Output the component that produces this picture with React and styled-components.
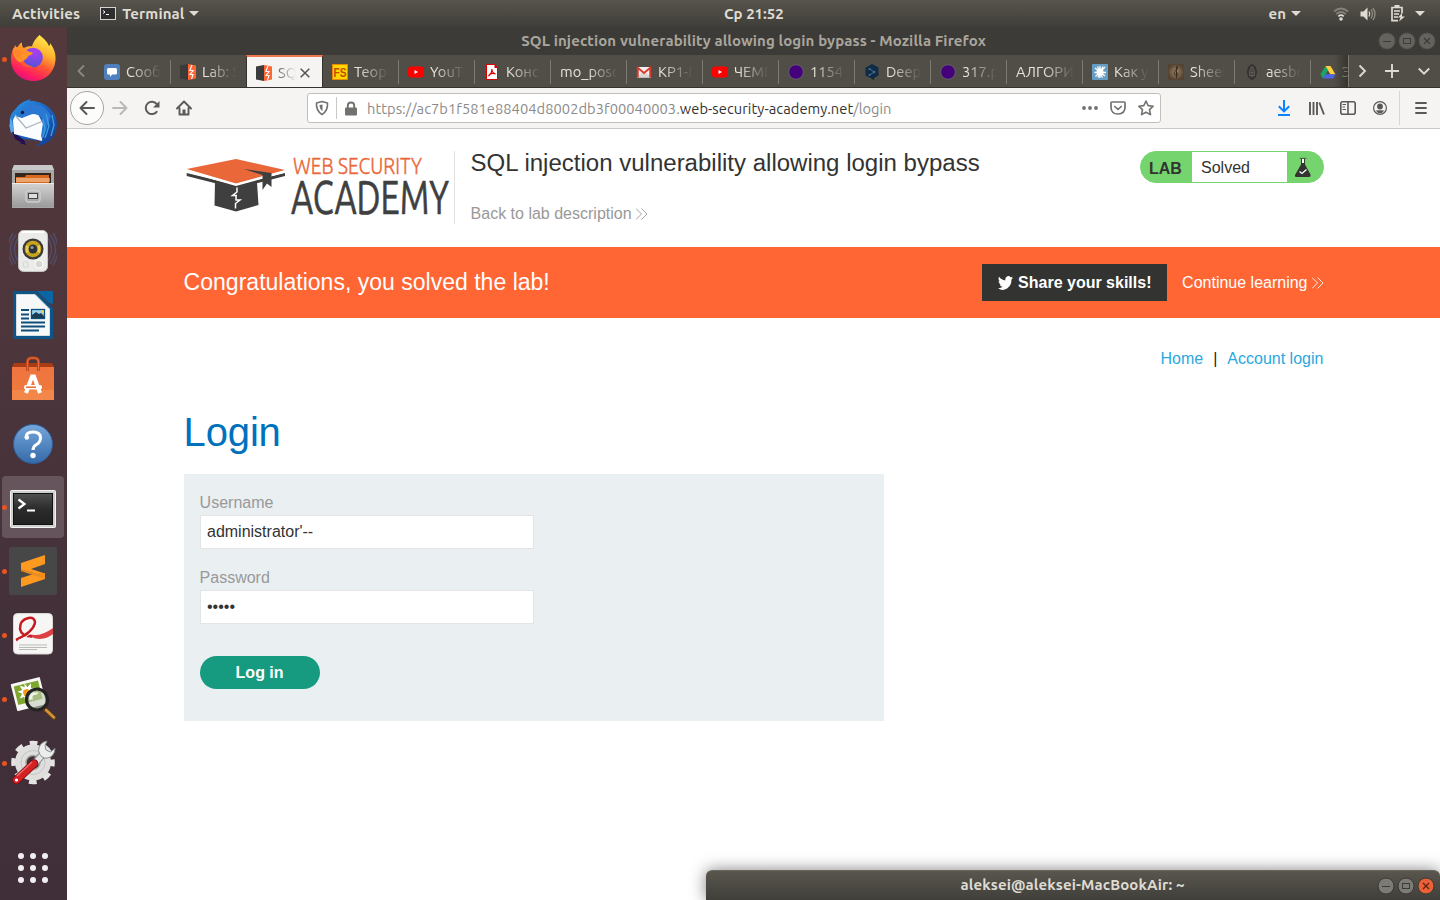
import React from "react";
import styled, { createGlobalStyle, css } from "styled-components";

const Global = createGlobalStyle`
  *, *::before, *::after { box-sizing: border-box; }
  body { margin: 0; overflow: hidden; }
  svg { display: block; flex: none; }
`;

const uiFont = `Ubuntu, "Noto Sans", "Open Sans", sans-serif`;
const pageFont = `"Liberation Sans", Arial, sans-serif`;

const Desktop = styled.div`
  position: relative;
  display: flex;
  flex-direction: column;
  width: 1440px;
  height: 900px;
  overflow: hidden;
  background: #fff;
  font-family: ${uiFont};
  font-size: 14.67px;
`;

/* ---------- system bar ---------- */

const TopBar = styled.header`
  display: grid;
  grid-template-columns: 712px auto 1fr;
  align-items: center;
  flex: none;
  height: 27px;
  padding: 0 15px 0 12px;
  background: linear-gradient(#57544c, #3f3e39);
  color: #dfdbd2;
  font-size: 15px;
  font-weight: 700;
`;

const BarGroup = styled.div`
  display: flex;
  align-items: center;
  justify-content: ${(p) => (p.$end ? "flex-end" : "flex-start")};
`;

const BarText = styled.span`
  line-height: 27px;
  white-space: nowrap;
  letter-spacing: ${(p) => p.$spacing || "0"};
  margin-left: ${(p) => p.$left || 0}px;
`;

const Caret = styled.span`
  width: 0;
  height: 0;
  margin-left: ${(p) => p.$left}px;
  border: 5px solid transparent;
  border-top-color: #dfdbd2;
  border-bottom: 0;
`;

const BarIcon = styled.svg`
  margin-left: ${(p) => p.$left}px;
`;

/* ---------- dock ---------- */

const Body = styled.div`
  display: flex;
  flex: 1;
  min-height: 0;
`;

const Dock = styled.nav`
  display: flex;
  flex-direction: column;
  flex: none;
  width: 67px;
  background: linear-gradient(#54393c, #4a343b 45%, #41303a 75%, #402e38);
`;

const DockCell = styled.div`
  display: flex;
  align-items: center;
  height: 64px;
  padding-left: 2px;
`;

const DockTile = styled.div`
  display: flex;
  align-items: center;
  width: 62px;
  height: 62px;
  border-radius: 4px;
  background: ${(p) => (p.$active ? "rgba(255,255,255,.17)" : "transparent")};
`;

const RunDot = styled.span`
  flex: none;
  width: 5px;
  height: 5px;
  margin-right: 2px;
  border-radius: 50%;
  background: ${(p) => (p.$on ? "#e95420" : "transparent")};
`;

const AppsGrid = styled.div`
  display: grid;
  grid-template-columns: repeat(3, 6px);
  gap: 6px;
  margin: auto 0 17px 18px;
`;

const AppsDot = styled.span`
  width: 6px;
  height: 6px;
  border-radius: 50%;
  background: #f2eff0;
`;

/* ---------- browser chrome ---------- */

const Browser = styled.main`
  display: flex;
  flex-direction: column;
  flex: 1;
  min-width: 0;
`;

const TitleBar = styled.div`
  display: grid;
  grid-template-columns: 80px 1fr 80px;
  align-items: center;
  flex: none;
  height: 28px;
  padding-right: 4px;
  background: #3c3b37;
  color: #aaa69d;
  font-weight: 700;
`;

const TitleText = styled.div`
  text-align: center;
  font-size: 15px;
  letter-spacing: 0.11px;
  white-space: nowrap;
  padding: 0 0 2px 4px;
`;

const WindowButtons = styled.div`
  display: flex;
  justify-content: flex-end;
  gap: 2px;
`;

const TabStrip = styled.div`
  display: flex;
  flex: none;
  height: 33px;
  background: #504e47;
  border-bottom: 1px solid #33322e;
`;

const ScrollLeft = styled.div`
  display: flex;
  align-items: center;
  justify-content: center;
  width: 28px;
`;

const TabList = styled.div`
  position: relative;
  display: flex;
  width: 1253px;
  overflow: hidden;
  &::after {
    content: "";
    position: absolute;
    top: 0;
    right: 0;
    bottom: 0;
    width: 14px;
    background: linear-gradient(90deg, transparent, rgba(45, 44, 40, 0.75));
  }
`;

const Tab = styled.div`
  display: flex;
  align-items: center;
  flex: none;
  width: 76px;
  height: 33px;
  padding-left: 9px;
  background: linear-gradient(#7d7a73, #7d7a73) right 5px / 1px 24px no-repeat;
  ${(p) => p.$plain && css`background: none;`}
  ${(p) =>
    p.$active &&
    css`
      width: 77px;
      margin-left: -1px;
      background: #f5f4f3;
      border-top: 2px solid #f0764f;
      border-left: 1px solid #33322e;
      border-right: 1px solid #33322e;
    `}
`;

const TabLabel = styled.span`
  width: ${(p) => p.$width || 35}px;
  margin-left: ${(p) => (p.$noIcon ? 0 : 6)}px;
  overflow: hidden;
  line-height: 24px;
  white-space: nowrap;
  color: ${(p) => (p.$active ? "#55534e" : "#e6e3dc")};
  mask-image: linear-gradient(90deg, #000 calc(100% - ${(p) => (p.$active ? 20 : 30)}px), transparent);
`;

const TabClose = styled.svg`
  margin-left: 4px;
`;

const StripActions = styled.div`
  display: flex;
  align-items: center;
  flex: 1;
  padding-left: 8px;
  border-left: 1px solid #7d7a73;
`;

const NavBar = styled.div`
  display: flex;
  align-items: center;
  flex: none;
  height: 41px;
  padding: 0 12px 0 3px;
  background: #f5f4f3;
  border-bottom: 1px solid #cbc9c7;
`;

const BackButton = styled.div`
  display: flex;
  align-items: center;
  justify-content: center;
  width: 34px;
  height: 34px;
  border: 1px solid #a7a5a2;
  border-radius: 50%;
  background: #fcfcfb;
`;

const NavIcon = styled.svg`
  margin-left: ${(p) => p.$left}px;
`;

const AddressBar = styled.div`
  display: flex;
  align-items: center;
  width: 854px;
  height: 30px;
  margin-left: 115px;
  padding: 0 6px 0 7px;
  border: 1px solid #c2c0bd;
  border-radius: 3px;
  background: #fff;
`;

const AddressDivider = styled.span`
  width: 1px;
  height: 22px;
  margin-left: 7px;
  background: #c9c8c6;
`;

const Url = styled.div`
  flex: 1;
  margin-left: 10px;
  padding-top: 1px;
  color: #8c8b89;
  white-space: nowrap;
`;

const UrlPrefix = styled.span`
  letter-spacing: 0.05px;
`;

const UrlHost = styled.span`
  color: #33322f;
  letter-spacing: 0.06px;
`;

const MenuDivider = styled.span`
  width: 1px;
  height: 34px;
  margin-left: 12px;
  background: #d8d6d4;
`;

/* ---------- page ---------- */

const Page = styled.div`
  flex: 1;
  background: #fff;
  color: #333332;
  font-family: ${pageFont};
  font-size: 16px;
`;

const LabHeader = styled.div`
  display: flex;
  height: 118px;
  padding: 22px 116px 0 116.6px;
`;

const LogoBox = styled.div`
  width: 271px;
  height: 73px;
  border-right: 1px solid #e0e0e0;
`;

const LabInfo = styled.div`
  flex: 1;
  padding-left: 16px;
`;

const LabTitle = styled.h2`
  margin: -2px 0 0;
  font-size: 24.03px;
  font-weight: 400;
  line-height: 28px;
`;

const TextLink = styled.a`
  display: flex;
  align-items: center;
  gap: 4px;
  line-height: 20px;
  color: ${(p) => p.$color};
  margin-top: ${(p) => p.$top || 0}px;
`;

const LabStatus = styled.div`
  display: flex;
  width: 184px;
  height: 32px;
  border: 1px solid #75d46e;
  border-radius: 16px;
  overflow: hidden;
  background: #75d46e;
`;

const StatusTag = styled.strong`
  width: 51px;
  padding-left: 8px;
  line-height: 33px;
`;

const StatusValue = styled.span`
  width: 95px;
  padding-left: 9px;
  background: #fff;
  line-height: 31px;
`;

const StatusIcon = styled.span`
  padding: 5px 0 0 7px;
`;

const Banner = styled.div`
  display: flex;
  align-items: center;
  height: 71px;
  padding: 0 116.5px 0 116.6px;
  background: #ff6633;
  color: #fff;
`;

const BannerText = styled.p`
  flex: 1;
  margin: 0;
  font-size: 23.04px;
`;

const ShareButton = styled.button`
  display: flex;
  align-items: center;
  gap: 5px;
  width: 185px;
  height: 37px;
  margin-right: 15px;
  padding: 0 0 0 16px;
  border: 0;
  background: #333332;
  color: #fff;
  font: 700 16px ${pageFont};
  white-space: nowrap;
`;

const SiteNav = styled.nav`
  display: flex;
  justify-content: flex-end;
  gap: 10px;
  padding: 31px 116.6px 0 0;
  line-height: 20px;
  color: #222;
`;

const NavLink = styled.a`
  color: #29a9e0;
`;

const Content = styled.section`
  padding: 39px 0 0 116.6px;
`;

const Heading = styled.h1`
  margin: 0;
  font-size: 40px;
  letter-spacing: -0.15px;
  font-weight: 400;
  line-height: 48px;
  color: #0071bc;
`;

const LoginForm = styled.form`
  width: 700px;
  height: 247px;
  margin-top: 18px;
  padding: 18px 16px;
  background: #eaeff2;
`;

const Label = styled.label`
  display: block;
  height: 23px;
  line-height: 21px;
  color: #999;
`;

const Input = styled.input`
  display: block;
  width: 334px;
  height: 34px;
  margin-bottom: 18px;
  padding: 0 6.4px;
  border: 1px solid #e4e4e4;
  background: #fff;
  color: #333332;
  font: 16px ${pageFont};
  outline: 0;
`;

const LoginButton = styled.button`
  display: block;
  width: 120px;
  height: 33px;
  margin-top: 32px;
  padding: 0;
  border: 0;
  border-radius: 17px;
  background: #169b80;
  color: #fff;
  font: 700 16px ${pageFont};
`;

/* ---------- terminal window peeking from the bottom ---------- */

const TerminalWindow = styled.aside`
  position: absolute;
  right: 0;
  bottom: 0;
  display: grid;
  grid-template-columns: 80px 1fr 80px;
  align-items: center;
  width: 734px;
  height: 30px;
  padding: 0 5px 0 0;
  border-top: 1px solid #6a675f;
  border-radius: 6px 6px 0 0;
  background: linear-gradient(#59564e, #403f3a);
  box-shadow: 0 0 16px rgba(0, 0, 0, 0.5);
  color: #dfdbd2;
  font-weight: 700;
`;

/* ---------- glyphs ---------- */

const WindowButton = ({ kind, fill, ring, mark }) => (
  <svg width="18" height="18" viewBox="0 0 18 18">
    <circle cx="9" cy="9" r="8" fill={fill} stroke={ring} />
    {kind === "min" && <path d="M5 9.5h8" stroke={mark} />}
    {kind === "max" && <rect x="5.5" y="6.5" width="7" height="5" fill="none" stroke={mark} />}
    {kind === "close" && <path d="M6 6l6 6M12 6l-6 6" stroke={mark} strokeWidth="1.2" />}
  </svg>
);

const DoubleChevron = ({ color }) => (
  <svg width="12" height="12" viewBox="0 0 12 12" fill="none" stroke={color} strokeWidth="0.9">
    <path d="M0 .5L5.500 6 0 11.500M5.500 .5L11 6 5.500 11.500" />
  </svg>
);

const favicons = {
  chat: (
    <>
      <rect width="16" height="16" rx="3" fill="#4f80bd" />
      <path d="M4.500 4h7Q13 4 13 5.500v3.500Q13 10.500 11.500 10.500H8L6 13v-2.500H4.500Q3 10.500 3 9V5.500Q3 4 4.500 4z" fill="#fff" />
    </>
  ),
  burp: (
    <>
      <path d="M0 1.500L8 0v16L0 14.500z" fill="#3b3b3b" />
      <path d="M8 0l8 1.500v13L8 16z" fill="#ff6633" />
      <path d="M12 1L9.800 6.500h3.400L10 10.500h3L11.500 15" fill="none" stroke="#fff" strokeWidth="1.100" />
    </>
  ),
  fs: (
    <>
      <rect x=".5" y=".5" width="15" height="15" fill="#ffd800" stroke="#e98b00" />
      <text x="1.500" y="12.500" fontFamily="Liberation Sans" fontWeight="700" fontSize="12" textLength="13" lengthAdjust="spacingAndGlyphs" fill="#c84a00">FS</text>
    </>
  ),
  youtube: (
    <>
      <rect y="2.500" width="16" height="11" rx="3" fill="#f00" />
      <path d="M6.500 6v4l3.500-2z" fill="#fff" />
    </>
  ),
  pdf: (
    <>
      <path d="M2.500.5h8l3 3v12h-11z" fill="#fff" stroke="#d90000" />
      <path d="M10.500 0v4h3.500z" fill="#d90000" />
      <path d="M7.800 5c.3 3-1.500 5.500-3.300 7 1-2 4-3 7-2.200-2-.3-3.500-2.500-3.700-4.800z" fill="none" stroke="#d90000" strokeWidth="1.200" />
    </>
  ),
  gmail: (
    <>
      <path d="M1 3h14v10.500H1z" fill="#f3f1ef" />
      <path d="M1 13.500l5-5 2 1.500 2-1.500 5 5z" fill="#d9d5d0" />
      <path d="M1.800 13.500V3.800L8 9l6.200-5.200v9.700" fill="none" stroke="#dc3a2e" strokeWidth="1.900" />
    </>
  ),
  purple: <circle cx="8" cy="8" r="7.300" fill="#43007a" stroke="#66606a" />,
  deepl: (
    <>
      <path d="M8 0l6.500 3.600v8L10 14v2.300L7.500 14.600 1.500 11.500V3.700z" fill="#0f2b46" />
      <path d="M5.500 5l5 3-5 3" fill="none" stroke="#4d7292" />
      <circle cx="5.500" cy="5" r="1" fill="#4d7292" />
      <circle cx="10.500" cy="8" r="1" fill="#4d7292" />
      <circle cx="5.500" cy="11" r="1" fill="#4d7292" />
    </>
  ),
  burst: (
    <>
      <rect width="16" height="16" rx="1" fill="#669dc4" />
      <circle cx="8" cy="8" r="3.500" fill="#fff" />
      <path d="M8 2v12M3 4l10 8M13 3L3.500 12.500M2.500 8.500H14M5.500 2.500l5 11M11 2.500l-5 11" stroke="#fff" strokeWidth="1.300" />
    </>
  ),
  clef: (
    <>
      <defs>
        <radialGradient id="clefPaper">
          <stop offset="0" stopColor="#a48a66" />
          <stop offset="1" stopColor="#544232" />
        </radialGradient>
      </defs>
      <rect width="16" height="16" fill="url(#clefPaper)" />
      <path d="M8.500 14V3.500Q8.500 2 9.500 2.500 10.500 4 7 7 5 10 7.500 11.300q3 .3 2.700-1.800Q9.500 7.500 7.500 9.200" fill="none" stroke="#2c2018" strokeWidth=".8" />
    </>
  ),
  oval: (
    <>
      <ellipse cx="8" cy="8" rx="4.300" ry="7.300" fill="#3b3a36" stroke="#2d2c29" />
      <path d="M8 2.500q-3 3-2.500 9h5q.5-6-2.500-9zM8 5v8M6.500 8.500h3" fill="none" stroke="#69665f" strokeWidth=".8" />
    </>
  ),
  drive: (
    <>
      <path d="M5.500 2L8 6.300 3 14.500.5 10.200z" fill="#16a765" />
      <path d="M5.500 2h5l5 8.500h-5z" fill="#ffcf3f" />
      <path d="M5.500 10.300h10L13 14.500H3z" fill="#5062e8" />
    </>
  ),
};

const Favicon = ({ name }) => (
  <svg width="16" height="16" viewBox="0 0 16 16">{favicons[name]}</svg>
);

const tabs = [
  { icon: "chat", label: "Сообщения" },
  { icon: "burp", label: "Lab: SQL", plain: true },
  { icon: "burp", label: "SQL inj", active: true },
  { icon: "fs", label: "Теория" },
  { icon: "youtube", label: "YouTube" },
  { icon: "pdf", label: "Конспект" },
  { label: "mo_posobie" },
  { icon: "gmail", label: "КР1-Мат" },
  { icon: "youtube", label: "ЧЕМПИОН" },
  { icon: "purple", label: "1154.pdf" },
  { icon: "deepl", label: "DeepL" },
  { icon: "purple", label: "317.pdf" },
  { label: "АЛГОРИТМ" },
  { icon: "burst", label: "Как учить" },
  { icon: "clef", label: "Sheet" },
  { icon: "oval", label: "aesbook" },
  { icon: "drive", label: "Экзамен" },
];

/* ---------- launcher icons ---------- */

const launchers = [
  {
    id: "firefox",
    running: true,
    art: (
      <>
        <defs>
          <linearGradient id="fxBody" x1=".8" y1="0" x2=".35" y2="1">
            <stop offset="0" stopColor="#fff14f" />
            <stop offset=".35" stopColor="#ffb52e" />
            <stop offset=".62" stopColor="#ff5634" />
            <stop offset=".85" stopColor="#ff1e60" />
            <stop offset="1" stopColor="#e3127b" />
          </linearGradient>
          <radialGradient id="fxGlobe" cx=".6" cy=".2" r=".85">
            <stop offset="0" stopColor="#b23cf2" />
            <stop offset="1" stopColor="#4a55d8" />
          </radialGradient>
        </defs>
        <path d="M30.500 0C34 3 38 6 40 11c1-.5 1-1.500 1-3 4 5 6 11 5.500 17C45.500 38 36 46 24.500 46 12 46 2 37 2 24 2 18 4 13 7 10c0 1.500.3 2.500 1 3.500C9.500 10 11 8 13 7.500c-.5 3 .5 4.500 2 5.500 2-1.500 5-2 8-1.700C24 7 27 3 30.500 0z" fill="url(#fxBody)" />
        <circle cx="24" cy="22.500" r="9.800" fill="url(#fxGlobe)" />
        <path d="M4 14c5-4 10-2 13.500 1.500 2.500 1.500 4.500 1 6.500 2.500-1 2-3.500 2-5 3.500-1 3-3.500 2.500-4 4.500 0 3-4 1-5 1C6 24 3 19 4 14z" fill="#ff9327" />
        <path d="M5 15c4-1 7 1 9 3l-5 5c-2-1-4-4-4-8z" fill="#ff7d2e" opacity=".7" />
        <path d="M14 25c2 4 6 6 10 6-4 3-10 1-12-3z" fill="#ff5a36" />
      </>
    ),
  },
  {
    id: "thunderbird",
    art: (
      <>
        <defs>
          <linearGradient id="tbBody" x1="0" y1="0" x2="1" y2="1">
            <stop offset="0" stopColor="#2a9bea" />
            <stop offset=".5" stopColor="#1b63c0" />
            <stop offset="1" stopColor="#12398e" />
          </linearGradient>
        </defs>
        <path d="M9 7C14 2 21 0 22 0l-2 2C33 1 47 10 48 24c0 12-8 22-20 23l4-5L6 39C0 32-1 20 3 14z" fill="url(#tbBody)" />
        <path d="M2 31l4 9 7 4h-3l7 2-2-5z" fill="#241054" />
        <path d="M4 21L6 17l7 2 10-4h6l5 10-1 17L5 35z" fill="#fbfcfe" />
        <path d="M6 16l11 13 17-7" fill="none" stroke="#aab2be" strokeWidth="1.200" />
        <path d="M11 13q4-8 16-8 10 2 15 12l-5 14-4 9-1-3 2-13q0-8-9-9-8 0-12 4z" fill="#2b78d2" />
        <path d="M37 15l3 12-4 12M43 16l2 10-3 11M34 20l2 10-2 8" fill="none" stroke="#3aa0e6" strokeWidth="1.300" />
        <circle cx="13.500" cy="13.500" r="1.700" fill="#111a3a" />
        <path d="M3 22l-2-3v7l-1-1 2 9 3-2z" fill="#5aa9ee" />
      </>
    ),
  },
  {
    id: "files",
    art: (
      <>
        <defs>
          <linearGradient id="flFront" x1="0" y1="0" x2="0" y2="1">
            <stop offset="0" stopColor="#d4d4d4" />
            <stop offset="1" stopColor="#9b9b9b" />
          </linearGradient>
        </defs>
        <path d="M5 2h38l2 5v38H3V7z" fill="#a6a6a6" />
        <path d="M5 2h38l2 5H3z" fill="#c8c8c8" />
        <rect x="6" y="10" width="36" height="10" fill="#33261f" />
        <path d="M7 14h9l1-2h23v8H7z" fill="#d96920" />
        <path d="M7 16h34M7 18h34" stroke="#ffe0b8" />
        <path d="M3 20h42v24H3z" fill="url(#flFront)" />
        <path d="M3 20.500h42" stroke="#ececec" />
        <rect x="17" y="28" width="14" height="11" rx="2" fill="#aaa" stroke="#dedede" />
        <rect x="19.500" y="30.500" width="9" height="5" fill="#dedede" stroke="#444" />
      </>
    ),
  },
  {
    id: "music",
    art: (
      <>
        <g fill="none" stroke="#56679a" strokeWidth="1.500" opacity=".45">
          <path d="M7 8Q-4 22 7 37M4 6Q-6 22 4 38M9 11Q2 22 9 34M41 8Q52 22 41 37M44 6Q54 22 44 38M39 11Q46 22 39 34" />
        </g>
        <rect x="9.500" y="3.500" width="29" height="41" rx="5" fill="#ebebe9" stroke="#c4c4c1" />
        <path d="M13 5h22" stroke="#fff" strokeWidth="2" />
        <circle cx="24" cy="22" r="10.500" fill="#3a3a3a" />
        <circle cx="24" cy="22" r="8.300" fill="#c6a51c" />
        <path d="M24 22l-7-4v8zM24 22l7-4v8z" fill="#e9ce4f" />
        <circle cx="24" cy="22" r="4.500" fill="#2d3337" />
        <circle cx="23" cy="20.500" r="1.600" fill="#8f9aa2" />
        <circle cx="30" cy="37" r="4" fill="#d6d6d2" stroke="#fff" />
        <rect x="14" y="35" width="5" height="5" rx="1" fill="none" stroke="#d4d4d0" />
      </>
    ),
  },
  {
    id: "writer",
    art: (
      <>
        <path d="M5 0h22l17 17v31H5q-1 0-1-1V1q0-1 1-1z" fill="#0d5487" />
        <path d="M7.500 3.500h18.500L40.500 18v26.500h-33z" fill="#f7f8f8" stroke="#d5dde2" />
        <path d="M28 0h15q1 0 1 1v12L40 12z" fill="#0b66a6" />
        <path d="M12 19h8M12 23.500h8M12 27.500h8M12 31.500h24M12 35.500h24M12 39.500h18" stroke="#0e4e7c" strokeWidth="2" />
        <rect x="22.500" y="18.500" width="13" height="9" fill="#9ed4ef" stroke="#0e4e7c" strokeWidth="1.300" />
        <path d="M23 27v-3l4-3 3 2 2-1 3 3v2z" fill="#183d55" />
        <circle cx="33.500" cy="20.500" r="1.500" fill="#f5cf44" />
      </>
    ),
  },
  {
    id: "software",
    art: (
      <>
        <defs>
          <linearGradient id="swBag" x1="0" y1="0" x2="0" y2="1">
            <stop offset="0" stopColor="#ee7440" />
            <stop offset="1" stopColor="#f07b3c" />
          </linearGradient>
        </defs>
        <path d="M5 8h38l2 4H3z" fill="#a93c14" />
        <path d="M3 12h42v33H3z" fill="url(#swBag)" />
        <path d="M3 35h42v10H3z" fill="#f48d4f" opacity=".7" />
        <path d="M18.500 16V7q0-4 4-4h3q4 0 4 4v9" fill="none" stroke="#bf461b" strokeWidth="3" />
        <path d="M18.500 16V7q0-4 4-4h3q4 0 4 4v9" fill="none" stroke="#e77043" strokeWidth="1" />
        <path d="M17 38L23 21.500h2L31 38" fill="none" stroke="#fff" strokeWidth="4" />
        <rect x="15" y="30" width="18" height="4.500" rx="2" fill="#fff" />
        <path d="M17 32.200h10" stroke="#ea6b30" strokeWidth="1.500" />
      </>
    ),
  },
  {
    id: "help",
    art: (
      <>
        <defs>
          <linearGradient id="hpDisc" x1="0" y1="0" x2="0" y2="1">
            <stop offset="0" stopColor="#75a7dc" />
            <stop offset="1" stopColor="#356aa8" />
          </linearGradient>
        </defs>
        <circle cx="24" cy="25" r="19.500" fill="url(#hpDisc)" stroke="#2d5f9c" />
        <path d="M17 18.500q0-5.500 7-5.500 7.500 0 7.500 6 0 4-4 6.500-3.500 2-3.500 5.500" fill="none" stroke="#fff" strokeWidth="3" />
        <circle cx="17.800" cy="18.500" r="2.300" fill="#fff" />
        <circle cx="24" cy="36.500" r="2.700" fill="#fff" />
      </>
    ),
  },
  {
    id: "terminal",
    running: true,
    active: true,
    art: (
      <>
        <defs>
          <linearGradient id="tmScreen" x1="0" y1="0" x2="0" y2="1">
            <stop offset="0" stopColor="#505050" />
            <stop offset=".5" stopColor="#2b2b2b" />
            <stop offset="1" stopColor="#222" />
          </linearGradient>
        </defs>
        <rect x="1.500" y="7.500" width="45" height="37" rx="1" fill="#cfcfcd" stroke="#f4f4f4" />
        <rect x="4.500" y="10.500" width="39" height="31" fill="url(#tmScreen)" stroke="#111" />
        <path d="M9.500 16.500l6 4.500-6 4.500" fill="none" stroke="#fff" strokeWidth="2.200" />
        <path d="M18 27.500h8" stroke="#fff" strokeWidth="2" />
      </>
    ),
  },
  {
    id: "editor",
    running: true,
    art: (
      <>
        <rect width="48" height="48" rx="2" fill="#474747" />
        <path d="M12 16l24-8v9l-14 5 14 4.500v5.500L12 40v-9l14-4.500-14-4z" fill="#ff9a20" />
        <path d="M12 22.500L26 26.500l10-.5v6L12 24z" fill="#f08c1b" />
      </>
    ),
  },
  {
    id: "documents",
    running: true,
    art: (
      <>
        <rect x="4.500" y="2.500" width="39" height="40.500" rx="4" fill="#f6f6f5" stroke="#d8d8d6" />
        <path d="M17 22q12 6 27-5v6q-10 8-22 3z" fill="#dc4043" />
        <path d="M7 29Q24 21 26 12 26 6 19.500 7 10.500 9 11 18q1.500 7.500 12 7.500" fill="none" stroke="#c71920" strokeWidth="2.500" />
        <path d="M9 29.500Q26 23 28 12" fill="none" stroke="#fff" strokeWidth="1" />
        <path d="M10 34h28M10 36.500h28M10 38.500h18" stroke="#b9b9b7" />
      </>
    ),
  },
  {
    id: "images",
    running: true,
    art: (
      <>
        <g transform="rotate(-14 20 19)">
          <rect x="4.500" y="5" width="30" height="28" rx="1" fill="#f7f7f5" />
          <rect x="7" y="8" width="25" height="19" fill="#7fa62f" />
          <path d="M18 7.500l2.200 4.500 4.200-3-1 5 5 .5-4 3 3.500 4-5-.5-.5 5-4-3.500-4 3 .5-5-5 .5 3.500-4-4-3 5-.5-1.500-5 4.500 3z" fill="#fff" />
          <circle cx="18" cy="17" r="3.500" fill="#f39d17" />
        </g>
        <path d="M36 34l9 9" stroke="#5f401c" strokeWidth="4.500" strokeLinecap="round" />
        <path d="M37 35l8 7.500" stroke="#d69435" strokeWidth="2.500" strokeLinecap="round" />
        <circle cx="28" cy="24.500" r="10.500" fill="#bfcbb7" fillOpacity=".6" stroke="#242424" strokeWidth="3.200" />
        <path d="M21 25q1-7 8-7" fill="none" stroke="#fff" strokeWidth="2" opacity=".7" />
      </>
    ),
  },
  {
    id: "tweaks",
    running: true,
    art: (
      <>
        <circle cx="24" cy="23.500" r="18.800" fill="none" stroke="#e4e4e2" strokeWidth="6" strokeDasharray="7.500 7.265" strokeDashoffset="3.750" />
        <circle cx="24" cy="23.500" r="12.500" fill="none" stroke="#dededc" strokeWidth="11" />
        <circle cx="24" cy="23.500" r="12" fill="none" stroke="#c5c5c3" />
        <circle cx="24" cy="23.500" r="7" fill="none" stroke="#a5a5a3" strokeWidth="1.500" />
        <path d="M26 24l8-9" stroke="#8b8e8f" strokeWidth="7.500" />
        <path d="M26 24l9-10" stroke="#e4e6e6" strokeWidth="5.500" />
        <path d="M38 2q-8 1.500-8.500 9.500 2 9 9.500 7.500 6.500-2 7-9.500l-4.500 3.500-4.500-2-1-4.500z" fill="#eceeee" stroke="#8b8e8f" />
        <path d="M7.500 41L25 24.500" stroke="#7c0d10" strokeWidth="8.500" strokeLinecap="round" />
        <path d="M7.500 41L25 24.500" stroke="#d32124" strokeWidth="6.800" strokeLinecap="round" />
        <path d="M8 37L23 23" stroke="#ee6a67" strokeWidth="1.500" />
        <circle cx="7.500" cy="41" r="1.600" fill="#fff" />
      </>
    ),
  },
];

const AcademyLogo = () => (
  <svg width="267" height="73" viewBox="0 0 267 73">
    <path d="M2.700 22l49.300 12 49-12v3L52 37.500 2.700 25z" fill="#3f3f3f" />
    <path d="M2.700 18L52 8l49 11-49 13.500z" fill="#ea6739" />
    <path d="M31 31.500l21 5.500 21-5.500L74.500 54 52 60.500 30.500 54.500z" fill="#3f3f3f" />
    <path d="M2.700 19.800L52 34l49-13.500" fill="none" stroke="#fff" strokeWidth="2" />
    <path d="M60 18l27.500 4V36l-4.500-3.500-4.500 6.500V24z" fill="#3f3f3f" />
    <path d="M53 36.500v4.500l-4.500 3.500H53M51.500 57.500v-5L56 49h-4v-4.500" fill="none" stroke="#fff" strokeWidth="1.500" />
    <text x="109" y="23" fontFamily="Ubuntu, Roboto, sans-serif" fontWeight="300" fontSize="23" textLength="129" lengthAdjust="spacingAndGlyphs" fill="#ea6739" stroke="#ea6739" strokeWidth=".4">WEB SECURITY</text>
    <text x="107" y="63" fontFamily="Ubuntu, Roboto, sans-serif" fontWeight="400" fontSize="46" textLength="158" lengthAdjust="spacingAndGlyphs" fill="#3f3f3f" stroke="#3f3f3f" strokeWidth=".7" strokeLinejoin="round">ACADEMY</text>
  </svg>
);

export default function App() {
  return (
    <Desktop>
      <Global />
      <TopBar>
        <BarGroup>
          <BarText $spacing=".15px">Activities</BarText>
          <BarIcon $left={20} width="16" height="13" viewBox="0 0 16 13">
            <rect x=".5" y=".5" width="15" height="12" fill="#2e2e2e" stroke="#d6d4d0" />
            <path d="M3 3.500l2 1.500-2 1.500M6 7.500h3" fill="none" stroke="#fff" />
          </BarIcon>
          <BarText $left={6} $spacing=".1px">Terminal</BarText>
          <Caret $left={5} />
        </BarGroup>
        <BarText>Ср 21:52</BarText>
        <BarGroup $end>
          <BarText>en</BarText>
          <Caret $left={5} />
          <BarIcon $left={32} width="16" height="16" viewBox="0 0 16 16" fill="none" strokeWidth="1.700">
            <path d="M1 5.500Q8-.5 15 5.500M3.300 8Q8 4 12.700 8" stroke="#858279" />
            <path d="M5.300 10.300Q8 8 10.700 10.300" stroke="#dfdbd2" />
            <circle cx="8" cy="13" r="1.800" fill="#dfdbd2" />
          </BarIcon>
          <BarIcon $left={11} width="16" height="16" viewBox="0 0 16 16" fill="none">
            <path d="M.5 5.500h3l4-4v13l-4-4h-3z" fill="#dfdbd2" />
            <path d="M9 5.500q1.500 2.500 0 5" stroke="#dfdbd2" strokeWidth="1.300" />
            <path d="M11 3.500q3 4.500 0 9M13 2q4 6 0 12" stroke="#8c897f" strokeWidth="1.400" />
          </BarIcon>
          <BarIcon $left={14} width="16" height="17" viewBox="0 0 16 17" fill="none" stroke="#dfdbd2">
            <path d="M8 15.700H2V2.500h10v6" strokeWidth="1.700" />
            <path d="M4.500 1h5" strokeWidth="2" />
            <path d="M4 6h6M4 9h5M4 12h4" strokeWidth="1.500" />
            <path d="M12 8l-4 4.500h2.500L9 16.500l6-5h-3z" fill="#dfdbd2" stroke="none" />
          </BarIcon>
          <Caret $left={9} />
        </BarGroup>
      </TopBar>

      <Body>
        <Dock>
          {launchers.map((l) => (
            <DockCell key={l.id}>
              <DockTile $active={l.active}>
                <RunDot $on={l.running} />
                <svg width="48" height="48" viewBox="0 0 48 48">{l.art}</svg>
              </DockTile>
            </DockCell>
          ))}
          <AppsGrid>
            {Array.from({ length: 9 }, (_, i) => <AppsDot key={i} />)}
          </AppsGrid>
        </Dock>

        <Browser>
          <TitleBar>
            <span />
            <TitleText>SQL injection vulnerability allowing login bypass - Mozilla Firefox</TitleText>
            <WindowButtons>
              {["min", "max", "close"].map((k) => (
                <WindowButton key={k} kind={k} fill="#65635e" ring="#55534e" mark="#3c3b37" />
              ))}
            </WindowButtons>
          </TitleBar>

          <TabStrip>
            <ScrollLeft>
              <svg width="10" height="14" viewBox="0 0 10 14" fill="none" stroke="#8c8981" strokeWidth="1.800">
                <path d="M8 1.500L2.500 7 8 12.500" />
              </svg>
            </ScrollLeft>
            <TabList>
              {tabs.map((t, i) => (
                <Tab key={i} $active={t.active} $plain={t.plain}>
                  {t.icon && <Favicon name={t.icon} />}
                  <TabLabel $noIcon={!t.icon} $active={t.active} $width={t.active ? 18 : t.icon ? 35 : 58}>
                    {t.label}
                  </TabLabel>
                  {t.active && (
                    <TabClose width="10" height="10" viewBox="0 0 10 10" stroke="#55534e" strokeWidth="1.500">
                      <path d="M.7.7l8.600 8.600M9.300.7L.7 9.300" />
                    </TabClose>
                  )}
                </Tab>
              ))}
            </TabList>
            <StripActions>
              <svg width="10" height="14" viewBox="0 0 10 14" fill="none" stroke="#dcd9d2" strokeWidth="1.900">
                <path d="M2.500 1.500L8 7l-5.500 5.500" />
              </svg>
              <NavIcon $left={18} width="14" height="14" viewBox="0 0 14 14" stroke="#dcd9d2" strokeWidth="1.900">
                <path d="M7 0v14M0 7h14" />
              </NavIcon>
              <NavIcon $left={19} width="12" height="10" viewBox="0 0 12 10" fill="none" stroke="#dcd9d2" strokeWidth="1.900">
                <path d="M.8 2.500L6 7.700l5.200-5.200" />
              </NavIcon>
            </StripActions>
          </TabStrip>

          <NavBar>
            <BackButton>
              <svg width="16" height="16" viewBox="0 0 16 16" fill="none" stroke="#5a5955" strokeWidth="2" strokeLinecap="round" strokeLinejoin="round">
                <path d="M15 8H1.500M7.500 2l-6 6 6 6" />
              </svg>
            </BackButton>
            <NavIcon $left={8} width="16" height="16" viewBox="0 0 16 16" fill="none" stroke="#bbb9b6" strokeWidth="2" strokeLinecap="round" strokeLinejoin="round">
              <path d="M1 8h13.500M8.500 2l6 6-6 6" />
            </NavIcon>
            <NavIcon $left={16} width="16" height="16" viewBox="0 0 16 16" fill="none" stroke="#5a5955" strokeWidth="2">
              <path d="M13.200 11.200A6.200 6.200 0 1 1 13 4.300" />
              <path d="M15.500 1v6.500H9z" fill="#5a5955" stroke="none" />
            </NavIcon>
            <NavIcon $left={16} width="16" height="16" viewBox="0 0 16 16" fill="none" stroke="#5a5955" strokeWidth="1.900" strokeLinejoin="round" strokeLinecap="round">
              <path d="M1 8.500l7-7 7 7M3.500 8v6.500h9V8" />
              <path d="M8 14V9.500" strokeLinecap="butt" strokeWidth="3" />
            </NavIcon>
            <AddressBar>
              <svg width="14" height="16" viewBox="0 0 14 16" fill="none" stroke="#72716e" strokeWidth="1.600">
                <path d="M7 1.500L12.500 3q.5 8-5.500 11.500Q1 11 1.500 3z" strokeLinejoin="round" />
                <path d="M7.500 4.500v6.500Q4.500 9 4.500 5z" fill="#72716e" stroke="none" />
              </svg>
              <AddressDivider />
              <NavIcon $left={8} width="12" height="15" viewBox="0 0 12 15">
                <rect y="6.500" width="12" height="8" rx="1" fill="#72716e" />
                <path d="M2.800 7V4.500Q2.800 1.500 6 1.500t3.200 3V7" fill="none" stroke="#72716e" strokeWidth="1.900" />
              </NavIcon>
              <Url>
                <UrlPrefix>https://ac7b1f581e88404d8002db3f00040003.</UrlPrefix>
                <UrlHost>web-security-academy.net</UrlHost>/login
              </Url>
              <NavIcon $left={0} width="16" height="4" viewBox="0 0 16 4" fill="#72716e">
                <circle cx="2" cy="2" r="1.900" />
                <circle cx="8" cy="2" r="1.900" />
                <circle cx="14" cy="2" r="1.900" />
              </NavIcon>
              <NavIcon $left={12} width="16" height="16" viewBox="0 0 16 16" fill="none" stroke="#72716e" strokeWidth="1.700" strokeLinecap="round" strokeLinejoin="round">
                <path d="M2 2h12q1 0 1 1v4q0 7-7 7T1 7V3q0-1 1-1z" />
                <path d="M4.800 6.500L8 9.500l3.200-3" />
              </NavIcon>
              <NavIcon $left={12} width="16" height="16" viewBox="0 0 16 16" fill="none" stroke="#72716e" strokeWidth="1.600" strokeLinejoin="round">
                <path d="M8 1l2.200 4.600 5 .6-3.700 3.400 1 5L8 12.200l-4.500 2.400 1-5L.8 6.200l5-.6z" />
              </NavIcon>
            </AddressBar>
            <NavIcon $left={116} width="14" height="16" viewBox="0 0 14 16" fill="none" stroke="#0a84ff" strokeWidth="2">
              <path d="M7 0v11M1.800 6.200L7 11.400l5.200-5.200M1 15h12" />
            </NavIcon>
            <NavIcon $left={18} width="16" height="14" viewBox="0 0 16 14" stroke="#5a5955" strokeWidth="1.900">
              <path d="M1 1v13M4.500 1v13M8 1v13M10.300 1.500l4.700 12" />
            </NavIcon>
            <NavIcon $left={15} width="16" height="14" viewBox="0 0 16 14" fill="none" stroke="#5a5955" strokeWidth="1.600">
              <rect x=".8" y=".8" width="14.400" height="12.400" rx="2" />
              <path d="M8 1v12" />
              <path d="M2.500 3.500H6M2.500 6H5M2.500 8.500H6" strokeWidth="1" />
            </NavIcon>
            <NavIcon $left={17} width="14" height="14" viewBox="0 0 14 14">
              <circle cx="7" cy="7" r="6.400" fill="none" stroke="#5a5955" strokeWidth="1.200" />
              <circle cx="7" cy="5.500" r="2.900" fill="#5a5955" />
              <path d="M2.700 9.500Q4.500 9.200 7 9.200t4.300.3Q9.500 12.300 7 12.300T2.700 9.500z" fill="#5a5955" />
            </NavIcon>
            <MenuDivider />
            <NavIcon $left={15} width="12" height="12" viewBox="0 0 12 12" stroke="#5a5955" strokeWidth="1.900" strokeLinecap="round">
              <path d="M1 1h10M1 6h10M1 11h10" />
            </NavIcon>
          </NavBar>

          <Page>
            <LabHeader>
              <LogoBox>
                <AcademyLogo />
              </LogoBox>
              <LabInfo>
                <LabTitle>SQL injection vulnerability allowing login bypass</LabTitle>
                <TextLink $color="#999" $top={27}>
                  Back to lab description <DoubleChevron color="#999" />
                </TextLink>
              </LabInfo>
              <LabStatus>
                <StatusTag>LAB</StatusTag>
                <StatusValue>Solved</StatusValue>
                <StatusIcon>
                  <svg width="18" height="21" viewBox="0 0 18 21">
                    <path d="M7 1h4v6.500L16.500 17.500q.5 2.500-1.500 2.500H2q-1.500 0-1-2L7 7.500z" fill="#333332" />
                    <path d="M8 2h2v4H8z" fill="#fff" />
                    <path d="M5.500 1.300h7" stroke="#4f6b4c" />
                    <path d="M5.500 14.500l2.500 2 4.500-4" fill="none" stroke="#fff" strokeWidth="1.300" />
                  </svg>
                </StatusIcon>
              </LabStatus>
            </LabHeader>

            <Banner>
              <BannerText>Congratulations, you solved the lab!</BannerText>
              <ShareButton>
                <svg width="15" height="14" viewBox="0 2 24 20" fill="#fff" preserveAspectRatio="none">
                  <path d="M24 4.600a10 10 0 0 1-2.800.8 5 5 0 0 0 2.100-2.700c-.9.600-2 1-3.100 1.200a4.900 4.900 0 0 0-8.400 4.500A14 14 0 0 1 1.700 3.200a4.900 4.900 0 0 0 1.500 6.500 4.900 4.900 0 0 1-2.200-.6c0 2.300 1.600 4.400 3.900 4.900a5 5 0 0 1-2.200.1 4.900 4.900 0 0 0 4.600 3.400A9.900 9.900 0 0 1 0 19.500 14 14 0 0 0 21.500 7.100 10 10 0 0 0 24 4.600z" />
                </svg>
                Share your skills!
              </ShareButton>
              <TextLink $color="#fff">
                Continue learning <DoubleChevron color="#fff" />
              </TextLink>
            </Banner>

            <SiteNav>
              <NavLink>Home</NavLink>
              <span>|</span>
              <NavLink>Account login</NavLink>
            </SiteNav>

            <Content>
              <Heading>Login</Heading>
              <LoginForm>
                <Label>Username</Label>
                <Input type="text" defaultValue="administrator'--" spellCheck={false} />
                <Label>Password</Label>
                <Input type="password" defaultValue="peter" />
                <LoginButton type="button">Log in</LoginButton>
              </LoginForm>
            </Content>
          </Page>
        </Browser>
      </Body>

      <TerminalWindow>
        <span />
        <TitleText>aleksei@aleksei-MacBookAir: ~</TitleText>
        <WindowButtons>
          <WindowButton kind="min" fill="#7d7b75" ring="#3a3935" mark="#3c3b37" />
          <WindowButton kind="max" fill="#7d7b75" ring="#3a3935" mark="#3c3b37" />
          <WindowButton kind="close" fill="#ea6037" ring="#3a3935" mark="#5a2413" />
        </WindowButtons>
      </TerminalWindow>
    </Desktop>
  );
}
